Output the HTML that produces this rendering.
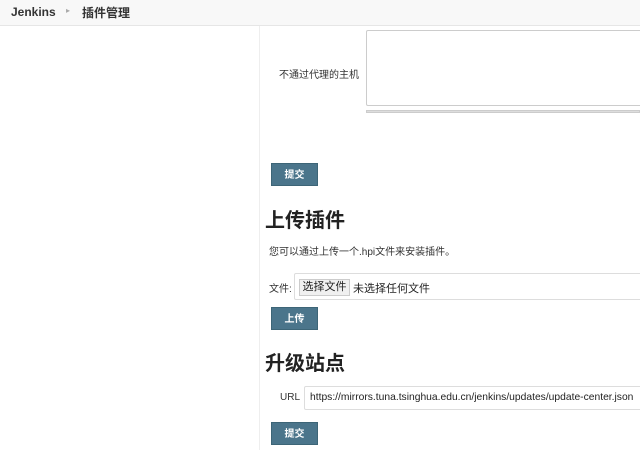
<!DOCTYPE html>
<html><head><meta charset="utf-8"><style>
body{margin:0;width:640px;height:450px;overflow:hidden;background:#fff;font-family:"Liberation Sans","Noto Sans CJK SC",sans-serif;color:#333;position:relative}
.a{position:absolute;white-space:nowrap}
.hdr{left:0;top:0;width:640px;height:25px;background:#f8f8f8;border-bottom:1px solid #e6e6e6}
.btn{background:#4b758b;color:#fff;font-size:10px;font-weight:bold;width:47px;height:23px;line-height:23px;text-align:center;border:1px solid #3d6577;box-sizing:border-box}
h2{margin:0;font-size:20px;font-weight:bold;color:#222;line-height:1}
</style></head><body>
<div class="a hdr"></div>
<div class="a" style="left:11px;top:5px;font-size:12px;font-weight:bold;color:#333">Jenkins</div>
<div class="a" style="left:66px;top:6px;font-size:8px;color:#aaa">▸</div>
<div class="a" style="left:82px;top:4px;font-size:12px;font-weight:bold;color:#333">插件管理</div>
<div class="a" style="left:259px;top:26px;width:1px;height:424px;background:#eee"></div>
<div class="a" style="left:279px;top:66px;font-size:10px;color:#333">不通过代理的主机</div>
<div class="a" style="left:366px;top:30px;width:290px;height:76px;border:1px solid #ccc;border-radius:2px;box-sizing:border-box"></div>
<div class="a" style="left:366px;top:110px;width:274px;height:3px;background:#ddd;border:1px solid #ccc;box-sizing:border-box"></div>
<div class="a btn" style="left:271px;top:163px">提交</div>
<h2 class="a" style="left:265px;top:211px">上传插件</h2>
<div class="a" style="left:269px;top:243px;font-size:10px">您可以通过上传一个.hpi文件来安装插件。</div>
<div class="a" style="left:269px;top:280px;font-size:10px">文件:</div>
<div class="a" style="left:294px;top:273px;width:360px;height:27px;border:1px solid #ddd;border-radius:2px;box-sizing:border-box"></div>
<div class="a" style="left:299px;top:279px;width:51px;height:17px;background:#f0f0f0;border:1px solid #ccc;box-sizing:border-box;font-size:11px;text-align:center;line-height:15px;color:#222">选择文件</div>
<div class="a" style="left:353px;top:280px;font-size:11px;color:#222">未选择任何文件</div>
<div class="a btn" style="left:271px;top:307px">上传</div>
<h2 class="a" style="left:265px;top:354px">升级站点</h2>
<div class="a" style="left:280px;top:392px;font-size:10px">URL</div>
<div class="a" style="left:304px;top:386px;width:350px;height:24px;border:1px solid #ddd;border-radius:2px;box-sizing:border-box"></div>
<div class="a" style="left:310px;top:392px;font-size:10.3px;color:#222">https://mirrors.tuna.tsinghua.edu.cn/jenkins/updates/update-center.json</div>
<div class="a btn" style="left:271px;top:422px">提交</div>
</body></html>
